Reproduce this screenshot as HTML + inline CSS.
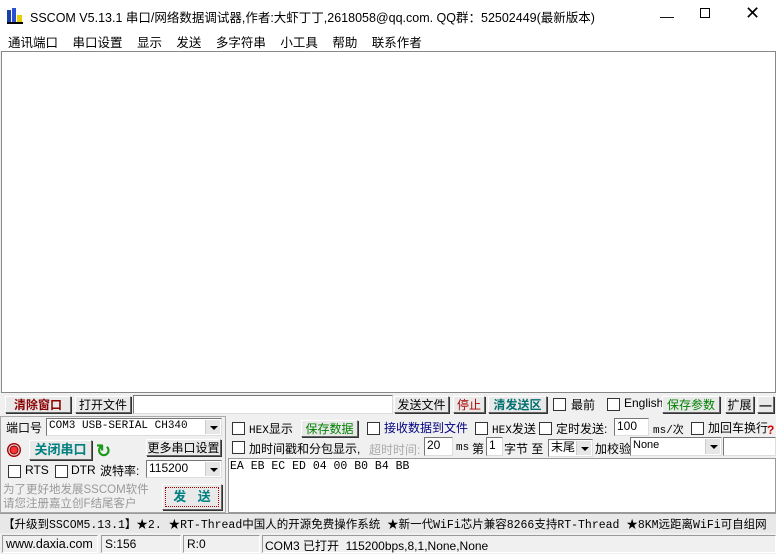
<!DOCTYPE html>
<html><head><meta charset="utf-8"><style>
*{box-sizing:border-box;margin:0;padding:0}
body{width:776px;height:554px;background:#f0f0f0;position:relative;overflow:hidden;font-family:"Liberation Sans","Noto Sans CJK SC",sans-serif;font-size:12px;color:#000}
.a{position:absolute;white-space:nowrap}
.btn{position:absolute;background:#e9e9e9;border:1px solid;border-color:#fff #666 #666 #fff;box-shadow:1px 1px 0 #333;text-align:center;font-size:12px;line-height:16px}
.in{position:absolute;background:#fff;border:1px solid;border-color:#777 #ddd #ddd #777;font-size:12px;line-height:15px;padding-left:2px}
.cb{position:absolute;width:13px;height:13px;background:#fff;border:1px solid #333}
.dd{position:absolute;right:1px;top:1px;bottom:1px;width:15px;background:#e6e6e6;border-left:1px solid #ccc}
.dd:after{content:"";position:absolute;left:4px;top:6px;border:4px solid transparent;border-top:4px solid #000;border-bottom:0}
.mono{font-family:"Liberation Mono","Noto Sans CJK SC",monospace}
</style></head><body>
<div class="a" style="left:0;top:0;width:776px;height:51px;background:#fff"></div>
<svg class="a" style="left:6px;top:7px" width="18" height="18"><rect x="1" y="3" width="4" height="14" fill="#1a3fb0"/><rect x="6" y="1" width="4" height="16" fill="#2a4fd0"/><rect x="11" y="8" width="5" height="9" fill="#e8d000"/><rect x="1" y="15" width="16" height="2" fill="#000"/></svg>
<div class="a" style="left:30px;top:7px;font-size:12.5px">SSCOM V5.13.1 串口/网络数据调试器,作者:大虾丁丁,2618058@qq.com. QQ群：52502449(最新版本)</div>
<div class="a" style="left:660px;top:8px;font-size:14px">—</div>
<div class="a" style="left:700px;top:8px;width:10px;height:10px;border:1px solid #000"></div>
<div class="a" style="left:745px;top:3px;font-size:18px;font-weight:300">✕</div>
<div class="a" style="left:8px;top:32px;word-spacing:11px;font-size:12.5px">通讯端口 串口设置 显示 发送 多字符串 小工具 帮助 联系作者</div>
<div class="a" style="left:1px;top:51px;width:775px;height:342px;background:#fff;border:1px solid #888"></div>
<div class="btn" style="left:5px;top:396px;width:66px;height:17px;color:#8b0000;font-weight:bold">清除窗口</div>
<div class="btn" style="left:75px;top:396px;width:56px;height:17px">打开文件</div>
<div class="in" style="left:133px;top:395px;width:260px;height:19px"></div>
<div class="btn" style="left:394px;top:396px;width:55px;height:17px">发送文件</div>
<div class="btn" style="left:453px;top:396px;width:32px;height:17px;color:#a00">停止</div>
<div class="btn" style="left:488px;top:396px;width:59px;height:17px;color:#007070;font-weight:bold">清发送区</div>
<div class="cb" style="left:553px;top:398px"></div><div class="a" style="left:571px;top:396px">最前</div>
<div class="cb" style="left:607px;top:398px"></div><div class="a" style="left:624px;top:396px">English</div>
<div class="btn" style="left:662px;top:396px;width:58px;height:17px;color:#008000">保存参数</div>
<div class="btn" style="left:725px;top:396px;width:29px;height:17px">扩展</div>
<div class="btn" style="left:757px;top:396px;width:17px;height:17px;font-weight:bold">—</div>
<div class="a" style="left:0;top:416px;width:226px;height:97px;border:1px solid #aaa"></div>
<div class="a" style="left:6px;top:419px">端口号</div>
<div class="in mono" style="left:46px;top:418px;width:176px;height:18px;font-size:11px">COM3 USB-SERIAL CH340<div class="dd"></div></div>
<div class="a" style="left:7px;top:443px;width:14px;height:14px;border-radius:50%;background:radial-gradient(circle,#f33 0 3px,#600 4px,#fff 5px,#a00 6px)"></div>
<div class="btn" style="left:29px;top:440px;width:63px;height:20px;color:#008080;font-weight:bold;font-size:13px;line-height:18px">关闭串口</div>
<div class="a" style="left:96px;top:441px;color:#1a9a1a;font-size:18px;font-weight:bold">↻</div>
<div class="btn" style="left:146px;top:439px;width:75px;height:17px">更多串口设置</div>
<div class="cb" style="left:8px;top:465px"></div><div class="a" style="left:25px;top:463px">RTS</div>
<div class="cb" style="left:55px;top:465px"></div><div class="a" style="left:71px;top:463px">DTR</div>
<div class="a" style="left:100px;top:462px">波特率:</div>
<div class="in" style="left:146px;top:460px;width:76px;height:18px">115200<div class="dd"></div></div>
<div class="a" style="left:3px;top:483px;color:#999;font-size:11.5px;line-height:14px">为了更好地发展SSCOM软件<br>请您注册嘉立创F结尾客户</div>
<div class="btn" style="left:162px;top:484px;width:60px;height:26px;color:#008080;font-weight:bold;font-size:13px;line-height:24px;word-spacing:8px;outline:1px dotted #a00;outline-offset:-4px">发 送</div>
<div class="cb" style="left:232px;top:422px"></div><div class="a" style="left:249px;top:420px"><span class="mono" style="font-size:11px">HEX</span>显示</div>
<div class="btn" style="left:301px;top:420px;width:57px;height:17px;color:#008000">保存数据</div>
<div class="cb" style="left:367px;top:422px"></div><div class="a" style="left:384px;top:419px;color:#000080">接收数据到文件</div>
<div class="cb" style="left:475px;top:422px"></div><div class="a" style="left:492px;top:420px"><span class="mono" style="font-size:11px">HEX</span>发送</div>
<div class="cb" style="left:539px;top:422px"></div><div class="a" style="left:556px;top:420px">定时发送:</div>
<div class="in" style="left:614px;top:418px;width:35px;height:18px">100</div>
<div class="a mono" style="left:653px;top:421px;font-size:11px">ms/次</div>
<div class="cb" style="left:691px;top:422px"></div><div class="a" style="left:708px;top:419px">加回车换行</div>
<div class="a" style="left:767px;top:423px;color:#c00;font-weight:bold">?</div>
<div class="cb" style="left:232px;top:441px"></div><div class="a" style="left:249px;top:440px">加时间戳和分包显示,</div>
<div class="a" style="left:369px;top:441px;color:#aaa">超时时间:</div>
<div class="in" style="left:424px;top:437px;width:29px;height:19px">20</div>
<div class="a mono" style="left:456px;top:442px;font-size:11px">ms</div>
<div class="a" style="left:472px;top:440px">第</div>
<div class="in" style="left:486px;top:437px;width:17px;height:19px">1</div>
<div class="a" style="left:504px;top:440px">字节 至</div>
<div class="in" style="left:548px;top:439px;width:45px;height:18px">末尾<div class="dd"></div></div>
<div class="a" style="left:595px;top:440px">加校验</div>
<div class="in" style="left:630px;top:437px;width:92px;height:19px;font-size:11px">None<div class="dd"></div></div>
<div class="in" style="left:723px;top:437px;width:53px;height:19px"></div>
<div class="a mono" style="left:228px;top:458px;width:548px;height:55px;background:#fff;border:1px solid #999;font-size:11.5px;padding:1px 1px">EA EB EC ED 04 00 B0 B4 BB</div>
<div class="a" style="left:0;top:513px;width:776px;height:20px;background:#e8e8e8;border-top:1px solid #999"></div>
<div class="a" style="left:3px;top:516px;font-size:11.5px;font-family:'Liberation Mono','Noto Sans CJK SC',monospace">【升级到SSCOM5.13.1】★2. ★RT-Thread中国人的开源免费操作系统 ★新一代WiFi芯片兼容8266支持RT-Thread ★8KM远距离WiFi可自组网</div>
<div class="a" style="left:0;top:534px;width:776px;height:20px;background:#f0f0f0"></div>
<div class="a" style="left:2px;top:535px;width:96px;height:18px;border:1px solid;border-color:#999 #fff #fff #999;padding:1px 3px;font-size:12.5px">www.daxia.com</div>
<div class="a" style="left:101px;top:535px;width:80px;height:18px;border:1px solid;border-color:#999 #fff #fff #999;padding:1px 3px">S:156</div>
<div class="a" style="left:183px;top:535px;width:77px;height:18px;border:1px solid;border-color:#999 #fff #fff #999;padding:1px 3px">R:0</div>
<div class="a" style="left:262px;top:535px;width:514px;height:18px;border:1px solid;border-color:#999 #fff #fff #999;padding:1px 2px">COM3 已打开&nbsp; 115200bps,8,1,None,None</div>
</body></html>
